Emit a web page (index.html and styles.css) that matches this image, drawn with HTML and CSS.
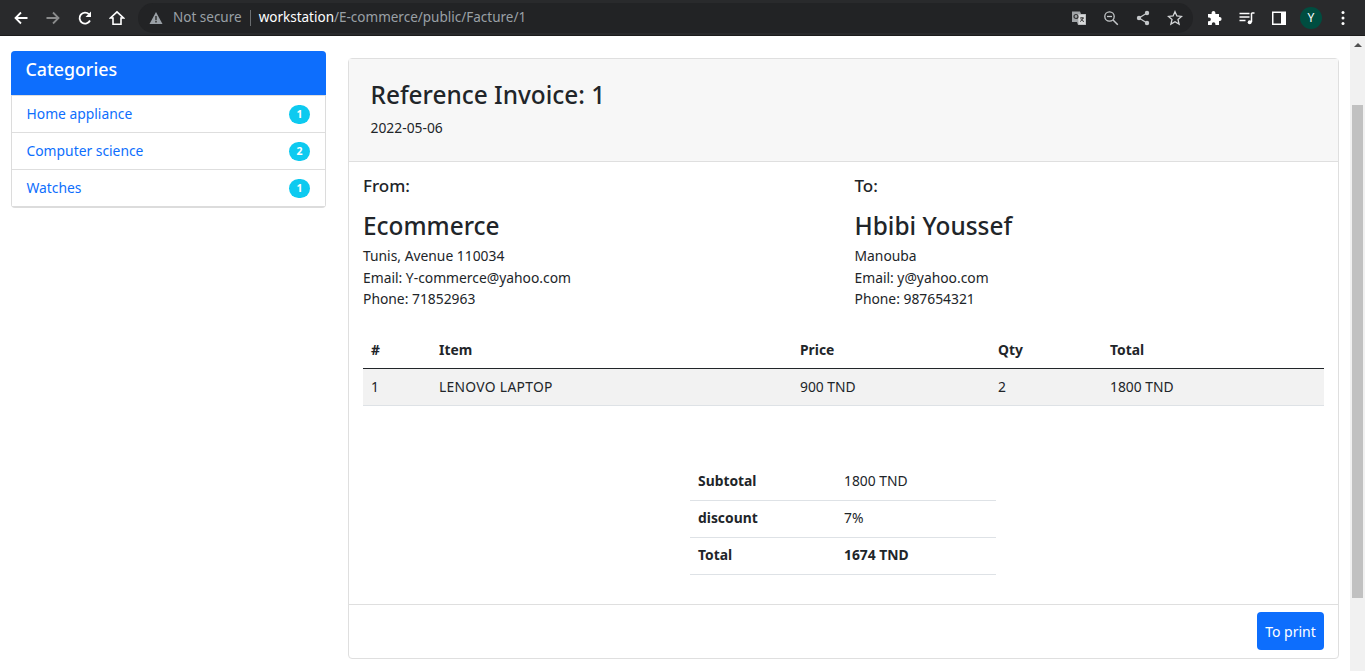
FILE: index.html
```html
<!DOCTYPE html>
<html>
<head>
    <title>Facture</title>
    <link rel="stylesheet" href="styles.css">
</head>
<body>
    <div class="chrome">
        <svg class="nav-icon" viewBox="0 0 16 16"><path d="M14.500 8H3M8 2.500 2.500 8 8 13.500" fill="none" stroke="#fff" stroke-width="1.800"/></svg>
        <svg class="nav-icon" viewBox="0 0 16 16"><path d="M1.500 8H13M8 2.500 13.500 8 8 13.500" fill="none" stroke="#8a8b8c" stroke-width="1.800"/></svg>
        <svg class="nav-icon" viewBox="0 0 16 16"><path d="M13 10.500A5.500 5.500 0 1 1 12 4.200" fill="none" stroke="#fff" stroke-width="1.800"/><path d="M14 1.500V7H8.500z" fill="#fff"/></svg>
        <svg class="nav-icon" viewBox="0 0 16 16"><path d="M8 1.800 1.500 8H4v6.200h8V8h2.500z" fill="none" stroke="#fff" stroke-width="1.600"/></svg>
        <div class="omnibox">
            <svg class="warn" viewBox="0 0 14 14"><path d="M7 1 13.500 13H.5z" fill="#9aa0a6"/><path d="M6.300 5h1.400v4.200H6.300zM6.300 10h1.400v1.400H6.300z" fill="#2b2b2b"/></svg>
            <span class="not-secure">Not secure</span>
            <span class="omni-sep"></span>
            <span class="url"><span class="host">workstation</span>/E-commerce/public/Facture/1</span>
            <div class="omni-actions">
                <svg class="tool" viewBox="0 0 16 16"><path d="M1 1.500h8l1 2.500h5v11H7l-1-3H1z" fill="#a0a3a6"/><path d="M7 4.500h7.500v10H7.600z" fill="#d8d9da"/><circle cx="5" cy="6.500" r="2" fill="none" stroke="#333" stroke-width="1.200"/><path d="M9 8h4M11 7v1M12 8c-.5 2-2 3-3 3.500M10 9c.5 1 1.500 2 3 2.500" fill="none" stroke="#333"/></svg>
                <svg class="tool" viewBox="0 0 16 16"><circle cx="6.500" cy="6.500" r="4.700" fill="none" stroke="#c4c7c9" stroke-width="1.300"/><path d="M10 10l4.800 4.800" stroke="#c4c7c9" stroke-width="1.500"/><path d="M4 6.500h5" stroke="#c4c7c9" stroke-width="1.300"/></svg>
                <svg class="tool" viewBox="0 0 16 16"><path d="M12 3 4 8l8 5" fill="none" stroke="#c4c7c9" stroke-width="1.300"/><circle cx="12" cy="3" r="2.200" fill="#c4c7c9"/><circle cx="4" cy="8" r="2.200" fill="#c4c7c9"/><circle cx="12" cy="13" r="2.200" fill="#c4c7c9"/></svg>
                <svg class="tool" viewBox="0 0 16 16"><path d="M8 1.700l1.900 4.300 4.600.4-3.500 3.100 1.100 4.600L8 11.700l-4.100 2.400L5 9.500 1.500 6.400l4.600-.4z" fill="none" stroke="#d4d6d8" stroke-width="1.300"/></svg>
            </div>
        </div>
        <div class="toolbar">
            <svg class="tool" viewBox="0 0 16 16"><path d="M6.500 1c1.100 0 1.900.8 1.900 1.900V4h3.600v3.100h.6a2 2 0 0 1 0 4H12V15H8.400v-1a1.800 1.800 0 0 0-3.600 0v1H1v-3.800h1a1.900 1.900 0 0 0 0-3.800H1V4h3.600V2.900C4.600 1.800 5.400 1 6.500 1z" fill="#fff"/></svg>
            <svg class="tool" viewBox="0 0 16 16"><path d="M.5 3.500h10M.5 7h10M.5 10.500h6" stroke="#fff" stroke-width="1.300"/><path d="M12.500 3v9" stroke="#fff" stroke-width="1.500"/><path d="M12.500 3H15.500" stroke="#fff" stroke-width="1.500"/><circle cx="10.700" cy="12.300" r="2" fill="#fff"/></svg>
            <svg class="tool" viewBox="0 0 16 16"><rect x="1" y="1.500" width="14" height="13.500" fill="#fff"/><rect x="2.500" y="3" width="7.500" height="10.500" fill="#292a2c"/></svg>
            <div class="avatar">Y</div>
            <svg class="kebab" viewBox="0 0 4 16"><circle cx="2" cy="2.500" r="1.500" fill="#fff"/><circle cx="2" cy="8" r="1.500" fill="#fff"/><circle cx="2" cy="13.500" r="1.500" fill="#fff"/></svg>
        </div>
    </div>

    <div class="viewport">
        <div class="page">
            <aside class="sidebar">
                <div class="side-title">Categories</div>
                <ul class="side-list">
                    <li><a href="#">Home appliance</a><span class="badge">1</span></li>
                    <li><a href="#">Computer science</a><span class="badge">2</span></li>
                    <li><a href="#">Watches</a><span class="badge">1</span></li>
                </ul>
            </aside>

            <main class="invoice">
                <div class="invoice-head">
                    <h3>Reference Invoice: 1</h3>
                    <p>2022-05-06</p>
                </div>
                <div class="invoice-body">
                    <div class="parties">
                        <div class="party">
                            <h5>From:</h5>
                            <h3>Ecommerce</h3>
                            <div>Tunis, Avenue 110034</div>
                            <div>Email: Y-commerce@yahoo.com</div>
                            <div>Phone: 71852963</div>
                        </div>
                        <div class="party">
                            <h5>To:</h5>
                            <h3>Hbibi Youssef</h3>
                            <div>Manouba</div>
                            <div>Email: y@yahoo.com</div>
                            <div>Phone: 987654321</div>
                        </div>
                    </div>

                    <table class="items">
                        <thead>
                            <tr>
                                <th class="c-num">#</th>
                                <th class="c-item">Item</th>
                                <th class="c-price">Price</th>
                                <th class="c-qty">Qty</th>
                                <th>Total</th>
                            </tr>
                        </thead>
                        <tbody>
                            <tr>
                                <td>1</td>
                                <td class="caps">LENOVO LAPTOP</td>
                                <td>900 TND</td>
                                <td>2</td>
                                <td>1800 TND</td>
                            </tr>
                        </tbody>
                    </table>

                    <table class="totals">
                        <tr><th>Subtotal</th><td>1800 TND</td></tr>
                        <tr><th>discount</th><td>7%</td></tr>
                        <tr><th>Total</th><td class="strong">1674 TND</td></tr>
                    </table>
                </div>
                <div class="invoice-foot">
                    <button class="print">To print</button>
                </div>
            </main>
        </div>
        <div class="scrollbar">
            <div class="arrow"></div>
            <div class="thumb"></div>
        </div>
    </div>
</body>
</html>
```

FILE: styles.css
```css
* {
    box-sizing: border-box;
}

html, body {
    height: 100%;
}

body {
    margin: 0;
    overflow: hidden;
    font-family: "Noto Sans", "Open Sans", sans-serif;
    font-size: 13.850px;
    line-height: 21.600px;
    color: #212529;
    background: #fff;
}

.chrome {
    display: flex;
    align-items: center;
    height: 36px;
    padding-left: 13px;
    background: #292a2c;
    border-bottom: 1px solid #1c1c1c;
}

.nav-icon {
    width: 16px;
    height: 16px;
    margin-right: 16px;
    flex: none;
}

.omnibox {
    display: flex;
    align-items: center;
    width: 1055px;
    height: 30px;
    margin-left: -3px;
    padding: 0 10px 0 11px;
    border-radius: 15px;
    background: #222325;
}

.warn {
    width: 14px;
    height: 14px;
    margin-right: 10px;
}

.not-secure {
    color: #9aa0a6;
    font-size: 13.500px;
}

.omni-sep {
    width: 1px;
    height: 16px;
    margin: 0 8px;
    background: #6a6d70;
}

.url {
    color: #9aa0a6;
    font-size: 13.500px;
}

.host {
    color: #fff;
}

.omni-actions {
    display: flex;
    gap: 16px;
    margin-left: auto;
}

.tool {
    width: 16px;
    height: 16px;
    flex: none;
}

.toolbar {
    display: flex;
    align-items: center;
    gap: 16px;
    margin-left: 14px;
}

.avatar {
    width: 22px;
    height: 22px;
    margin-left: -3px;
    border-radius: 50%;
    background: #004d40;
    color: #fff;
    font-size: 12px;
    line-height: 22px;
    text-align: center;
}

.kebab {
    width: 4px;
    height: 16px;
    margin-left: 3px;
}

.viewport {
    display: flex;
    height: 635px;
}

.page {
    display: flex;
    align-items: flex-start;
    flex: 1;
    min-width: 0;
}

.sidebar {
    width: 315px;
    margin: 15px 0 0 11px;
    flex: none;
    border-radius: 4px;
    overflow: hidden;
    background: #dcdcdc;
    padding-bottom: 2px;
}

.side-title {
    height: 44px;
    padding: 6px 14.500px;
    background: #0d6efd;
    color: #fff;
    font-size: 17.800px;
    line-height: 24px;
    font-weight: 500;
}

.side-list {
    list-style: none;
    margin: 0 1px;
    padding: 0;
    background: #fff;
}

.side-list li {
    display: flex;
    align-items: center;
    justify-content: space-between;
    height: 37px;
    padding: 0 15px 0 14.500px;
    border-top: 1px solid #dedede;
}

.side-list a {
    color: #0d6efd;
    text-decoration: none;
}

.badge {
    width: 21px;
    height: 19px;
    border-radius: 10px;
    background: #0dcaf0;
    color: #fff;
    font-size: 10.500px;
    font-weight: 700;
    line-height: 19px;
    text-align: center;
}

.invoice {
    width: 991px;
    height: 601px;
    margin: 22px 0 0 22px;
    flex: none;
    display: flex;
    flex-direction: column;
    border: 1px solid #dfdfdf;
    border-radius: 4px;
}

.invoice-head {
    height: 103px;
    padding: 18px 21.500px 0;
    background: #f7f7f7;
    border-bottom: 1px solid #dfdfdf;
}

.invoice-head h3 {
    margin: 0 0 4px;
    font-size: 24.400px;
    line-height: 36px;
    font-weight: 500;
}

.invoice-head p {
    margin: 0;
}

.invoice-body {
    flex: 1;
    padding: 13px 14px 0;
}

.parties {
    display: flex;
    height: 157px;
}

.party {
    width: 491.500px;
    flex: none;
}

.party h5 {
    margin: 0 0 11px;
    font-size: 17px;
    line-height: 22px;
    font-weight: 500;
}

.party h3 {
    margin: 0 0 1px;
    font-size: 24.400px;
    line-height: 36px;
    font-weight: 500;
}

.items {
    width: 961px;
    border-collapse: collapse;
    table-layout: fixed;
}

.items th, .items td {
    padding: 0 8px;
    text-align: left;
}

.items th {
    height: 36px;
    border-bottom: 1px solid #212529;
}

.items td {
    height: 37px;
    background: #f2f2f2;
    border-bottom: 1px solid #dee2e6;
}

.items .caps {
    letter-spacing: .3px;
}

.c-num {
    width: 68px;
}

.c-item {
    width: 361px;
}

.c-price {
    width: 198px;
}

.c-qty {
    width: 112px;
}

.totals {
    width: 306px;
    margin: 58px 0 0 327px;
    border-collapse: collapse;
    table-layout: fixed;
}

.totals th, .totals td {
    height: 37px;
    padding: 0 8px 2px;
    text-align: left;
    border-bottom: 1px solid #dee2e6;
}

.totals th {
    width: 146px;
}

.strong {
    font-weight: 700;
}

.invoice-foot {
    display: flex;
    justify-content: flex-end;
    height: 54px;
    padding: 7px 14px 0;
    border-top: 1px solid #dfdfdf;
}

.print {
    width: 67px;
    height: 38px;
    padding: 0;
    border: none;
    border-radius: 4px;
    background: #0d6efd;
    color: #fff;
    font-family: inherit;
    font-size: 14px;
}

.scrollbar {
    position: relative;
    width: 15px;
    margin-left: 1px;
    flex: none;
    background: #f1f1f1;
}

.arrow {
    width: 0;
    height: 0;
    margin: 7px auto 0;
    border-left: 4px solid transparent;
    border-right: 4px solid transparent;
    border-bottom: 4px solid #505050;
}

.thumb {
    height: 493px;
    margin: 58px 2px 0;
    background: #c1c1c1;
}
```
